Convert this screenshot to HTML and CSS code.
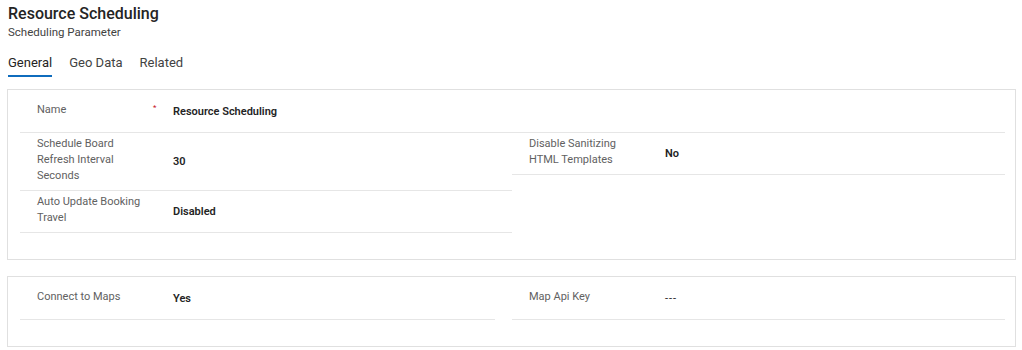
FILE: index.html
```html
<!DOCTYPE html>
<html lang="en">
<head>
  <meta charset="UTF-8" />
  <title>Resource Scheduling | Scheduling Parameter</title>
  <link rel="stylesheet" href="styles.css">
</head>
<body>
  <div class="header">
    <h1 class="title">Resource Scheduling</h1>
    <div class="subtitle">Scheduling Parameter</div>
  </div>

  <ul class="tabs">
    <li class="tab active">General</li>
    <li class="tab">Geo Data</li>
    <li class="tab">Related</li>
  </ul>

  <section class="card">
    <div class="row full">
      <div class="label">Name <span class="req">*</span></div>
      <div class="value">Resource Scheduling</div>
    </div>
    <div class="cols">
      <div class="col">
        <div class="row">
          <div class="label">Schedule Board Refresh Interval Seconds</div>
          <div class="value">30</div>
        </div>
        <div class="row">
          <div class="label">Auto Update Booking Travel</div>
          <div class="value">Disabled</div>
        </div>
      </div>
      <div class="col">
        <div class="row">
          <div class="label">Disable Sanitizing HTML Templates</div>
          <div class="value">No</div>
        </div>
      </div>
    </div>
  </section>

  <section class="card">
    <div class="cols split">
      <div class="col">
        <div class="row">
          <div class="label">Connect to Maps</div>
          <div class="value">Yes</div>
        </div>
      </div>
      <div class="col">
        <div class="row">
          <div class="label">Map Api Key</div>
          <div class="value empty">---</div>
        </div>
      </div>
    </div>
  </section>
</body>
</html>
```

FILE: styles.css
```css
body {
  font-family: Roboto, 'Noto Sans', sans-serif;
  color: #242424;
  background: #fff;
  margin: 0;
  padding: 0 6px 0 7px;
}
.header {
  padding: 3px 1px 0;
}
.title {
  font-size: 16px;
  font-weight: 500;
  line-height: 21px;
  margin: 0;
}
.subtitle {
  font-size: 11.5px;
  line-height: 16px;
  color: #424242;
}
.tabs {
  list-style: none;
  margin: 14px 0 0;
  padding: 0 1px;
  display: flex;
  gap: 17px;
}
.tab {
  font-size: 13px;
  line-height: 18px;
  padding-bottom: 3px;
  color: #424242;
  border-bottom: 2px solid transparent;
}
.tab.active {
  color: #242424;
  border-bottom-color: #0f6cbd;
}
.card {
  border: 1px solid #e0e0e0;
  padding: 1px 10px 26px 12px;
  margin-top: 12px;
}
.card + .card {
  margin-top: 16px;
}
.cols {
  display: grid;
  grid-template-columns: 492px 493px;
}
.cols.split {
  grid-template-columns: 475px 493px;
  column-gap: 17px;
}
.row {
  display: flex;
  align-items: center;
  min-height: 35px;
  padding: 3px 0;
  border-bottom: 1px solid #e6e6e6;
}
.label {
  position: relative;
  flex: none;
  width: 110px;
  padding: 0 26px 3px 17px;
  font-size: 11px;
  line-height: 16px;
  color: #616161;
}
.req {
  position: absolute;
  left: 133px;
  top: -2px;
  color: #c50f1f;
  font-size: 8px;
}
.value {
  font-size: 11px;
  font-weight: 600;
  color: #242424;
}
.value.empty {
  font-weight: 400;
  letter-spacing: 1px;
}
```
